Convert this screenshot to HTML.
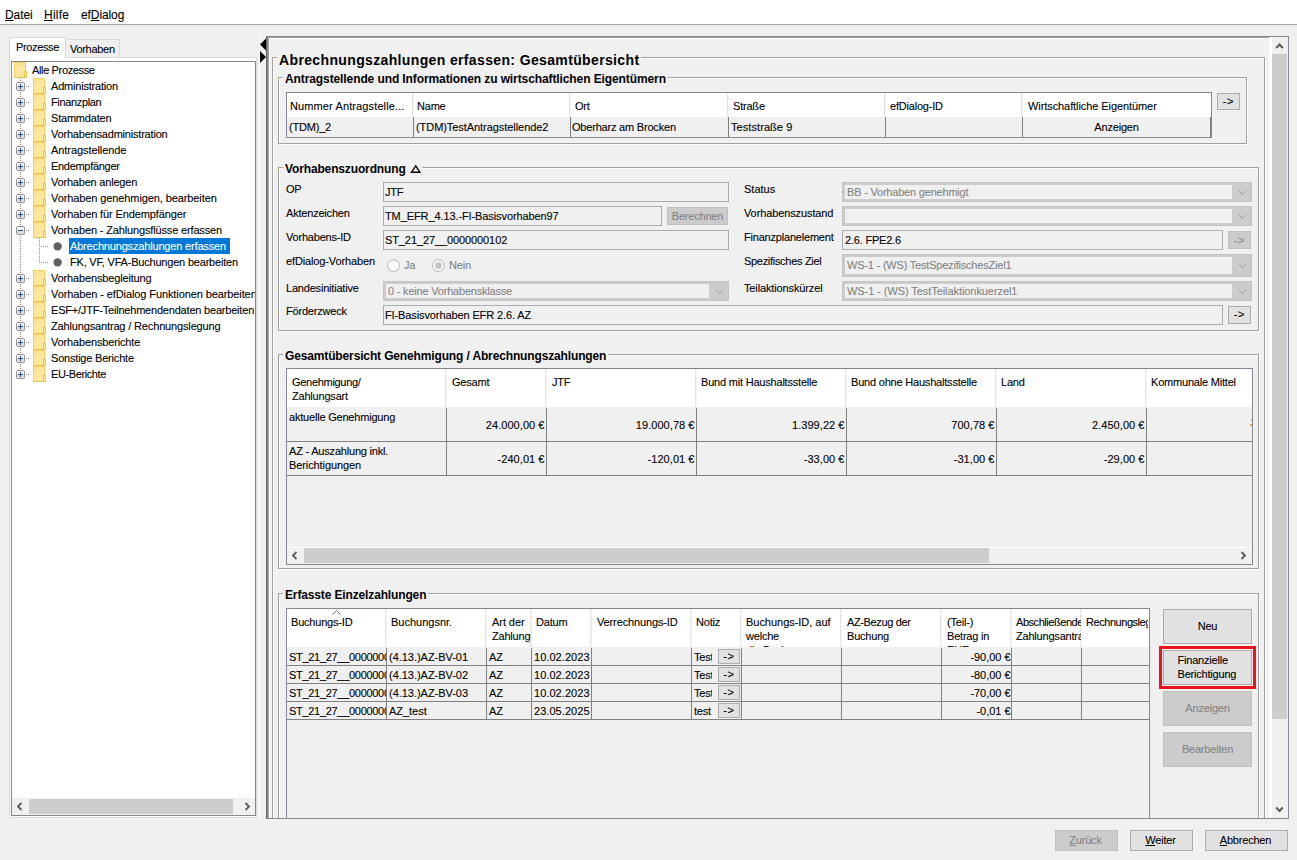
<!DOCTYPE html><html><head><meta charset="utf-8"><title>efREporter</title><style>
html,body{margin:0;padding:0}
body{width:1297px;height:860px;position:relative;overflow:hidden;background:#f0f0f0;
 font-family:"Liberation Sans",sans-serif;font-size:11px;line-height:13px;color:#000;letter-spacing:-0.2px}
div,span,svg{position:absolute;box-sizing:border-box;white-space:nowrap}
.t{font-size:11px;line-height:13px;-webkit-text-stroke:0.1px}
.g{color:#838383}
.b12{font-size:12px;line-height:14px;font-weight:bold;letter-spacing:-0.14px;background:#f0f0f0;padding:0 2px}
.b14{font-size:14px;line-height:16px;font-weight:bold;letter-spacing:0.36px;background:#f0f0f0;padding:0 2px}
.m{font-size:12px;line-height:14px;letter-spacing:-0.1px;-webkit-text-stroke:0.1px}
.eh{border:1px solid #fff}
.es{border:1px solid #a0a0a0}
.fld{border:1px solid #abadb3;background:#f0f0f0}
.btn{border:1px solid #adadad;background:#e1e1e1;text-align:center}
.btd{border:1px solid #bfbfbf;background:#ccc;color:#838383;text-align:center}
.cmb{border:1px solid #c3c3c3;background:#ccc}
.cmb i{position:absolute;left:2px;top:2px;bottom:2px;right:19px;background:#f0f0f0}
.sp{border:1px solid #828790}
.hd{background:#fff}
.vl{background:#808080;width:1px}
.hl{background:#808080;height:1px}
.vh{background:linear-gradient(to right,#e5e5e5 0,#e5e5e5 1px,#f4f4f4 1px,#f4f4f4 2px)}
.clip{overflow:hidden}
.u{text-decoration:underline}
.ar{letter-spacing:0.8px}
</style></head><body>
<div style="left:0px;top:0px;width:1297px;height:24px;background:#fff"></div>
<div style="left:0px;top:24px;width:1297px;height:1px;background:#a6a6a6"></div>
<span class="m" style="left:5px;top:8px"><span class="u" style="position:static">D</span>atei</span>
<span class="m" style="left:44px;top:8px"><span style="position:static;letter-spacing:0.25px"><span class="u" style="position:static">H</span>ilfe</span></span>
<span class="m" style="left:81px;top:8px">ef<span class="u" style="position:static">D</span>ialog</span>
<div style="left:9px;top:57px;width:248px;height:761px;background:#fff;border:1px solid #d9d9d9"></div>
<div style="left:65px;top:39px;width:55px;height:19px;background:#f0f0f0;border:1px solid #d9d9d9"></div>
<div style="left:9px;top:37px;width:57px;height:22px;background:#fff;border:1px solid #d9d9d9;border-bottom:none"></div>
<span class="t" style="left:16px;top:41px;letter-spacing:-0.36px">Prozesse</span>
<span class="t" style="left:70px;top:43px;letter-spacing:-0.3px">Vorhaben</span>
<div class="sp" style="left:11px;top:61px;width:245px;height:755px;background:#fff"></div>
<div class="clip" style="left:12px;top:62px;width:243px;height:736px">
<svg width="13" height="16" viewBox="0 0 13 16" style="left:2px;top:0px"><rect x="0.5" y="0.5" width="11" height="15" fill="#fde69e" stroke="#f3cf63"/><rect x="1" y="1" width="10" height="4" fill="#fce08c" opacity=".5"/><rect x="10.5" y="9.5" width="2" height="6" fill="#fde69e" stroke="#f0c850"/><rect x="0" y="15" width="13" height="1" fill="#edc552"/></svg>
<span class="t" style="left:20px;top:2px;letter-spacing:-0.36px">Alle Prozesse</span>
<div style="left:8px;top:16px;width:1px;height:297px;background:repeating-linear-gradient(to bottom,#8c8c8c 0,#8c8c8c 1px,transparent 1px,transparent 2px)"></div>
<div style="left:14px;top:24px;width:4px;height:1px;background:repeating-linear-gradient(to right,#8c8c8c 0,#8c8c8c 1px,transparent 1px,transparent 2px)"></div>
<svg width="9" height="9" viewBox="0 0 9 9" style="left:4px;top:20px"><rect x="0" y="0" width="9" height="9" fill="#fff"/><rect x="0.5" y="0.5" width="8" height="8" rx="1.2" fill="#f4f4f4" stroke="#919191"/><rect x="1" y="5" width="7" height="3" fill="#dcdcdc"/><rect x="2" y="4" width="5" height="1" fill="#2d4c9a"/><rect x="4" y="2" width="1" height="5" fill="#2d4c9a"/></svg>
<svg width="13" height="16" viewBox="0 0 13 16" style="left:21px;top:16px"><rect x="0.5" y="0.5" width="11" height="15" fill="#fde69e" stroke="#f3cf63"/><rect x="1" y="1" width="10" height="4" fill="#fce08c" opacity=".5"/><rect x="10.5" y="9.5" width="2" height="6" fill="#fde69e" stroke="#f0c850"/><rect x="0" y="15" width="13" height="1" fill="#edc552"/></svg>
<span class="t" style="left:39px;top:18px;">Administration</span>
<div style="left:14px;top:40px;width:4px;height:1px;background:repeating-linear-gradient(to right,#8c8c8c 0,#8c8c8c 1px,transparent 1px,transparent 2px)"></div>
<svg width="9" height="9" viewBox="0 0 9 9" style="left:4px;top:36px"><rect x="0" y="0" width="9" height="9" fill="#fff"/><rect x="0.5" y="0.5" width="8" height="8" rx="1.2" fill="#f4f4f4" stroke="#919191"/><rect x="1" y="5" width="7" height="3" fill="#dcdcdc"/><rect x="2" y="4" width="5" height="1" fill="#2d4c9a"/><rect x="4" y="2" width="1" height="5" fill="#2d4c9a"/></svg>
<svg width="13" height="16" viewBox="0 0 13 16" style="left:21px;top:32px"><rect x="0.5" y="0.5" width="11" height="15" fill="#fde69e" stroke="#f3cf63"/><rect x="1" y="1" width="10" height="4" fill="#fce08c" opacity=".5"/><rect x="10.5" y="9.5" width="2" height="6" fill="#fde69e" stroke="#f0c850"/><rect x="0" y="15" width="13" height="1" fill="#edc552"/></svg>
<span class="t" style="left:39px;top:34px;letter-spacing:-0.35px">Finanzplan</span>
<div style="left:14px;top:56px;width:4px;height:1px;background:repeating-linear-gradient(to right,#8c8c8c 0,#8c8c8c 1px,transparent 1px,transparent 2px)"></div>
<svg width="9" height="9" viewBox="0 0 9 9" style="left:4px;top:52px"><rect x="0" y="0" width="9" height="9" fill="#fff"/><rect x="0.5" y="0.5" width="8" height="8" rx="1.2" fill="#f4f4f4" stroke="#919191"/><rect x="1" y="5" width="7" height="3" fill="#dcdcdc"/><rect x="2" y="4" width="5" height="1" fill="#2d4c9a"/><rect x="4" y="2" width="1" height="5" fill="#2d4c9a"/></svg>
<svg width="13" height="16" viewBox="0 0 13 16" style="left:21px;top:48px"><rect x="0.5" y="0.5" width="11" height="15" fill="#fde69e" stroke="#f3cf63"/><rect x="1" y="1" width="10" height="4" fill="#fce08c" opacity=".5"/><rect x="10.5" y="9.5" width="2" height="6" fill="#fde69e" stroke="#f0c850"/><rect x="0" y="15" width="13" height="1" fill="#edc552"/></svg>
<span class="t" style="left:39px;top:50px;">Stammdaten</span>
<div style="left:14px;top:72px;width:4px;height:1px;background:repeating-linear-gradient(to right,#8c8c8c 0,#8c8c8c 1px,transparent 1px,transparent 2px)"></div>
<svg width="9" height="9" viewBox="0 0 9 9" style="left:4px;top:68px"><rect x="0" y="0" width="9" height="9" fill="#fff"/><rect x="0.5" y="0.5" width="8" height="8" rx="1.2" fill="#f4f4f4" stroke="#919191"/><rect x="1" y="5" width="7" height="3" fill="#dcdcdc"/><rect x="2" y="4" width="5" height="1" fill="#2d4c9a"/><rect x="4" y="2" width="1" height="5" fill="#2d4c9a"/></svg>
<svg width="13" height="16" viewBox="0 0 13 16" style="left:21px;top:64px"><rect x="0.5" y="0.5" width="11" height="15" fill="#fde69e" stroke="#f3cf63"/><rect x="1" y="1" width="10" height="4" fill="#fce08c" opacity=".5"/><rect x="10.5" y="9.5" width="2" height="6" fill="#fde69e" stroke="#f0c850"/><rect x="0" y="15" width="13" height="1" fill="#edc552"/></svg>
<span class="t" style="left:39px;top:66px;">Vorhabensadministration</span>
<div style="left:14px;top:88px;width:4px;height:1px;background:repeating-linear-gradient(to right,#8c8c8c 0,#8c8c8c 1px,transparent 1px,transparent 2px)"></div>
<svg width="9" height="9" viewBox="0 0 9 9" style="left:4px;top:84px"><rect x="0" y="0" width="9" height="9" fill="#fff"/><rect x="0.5" y="0.5" width="8" height="8" rx="1.2" fill="#f4f4f4" stroke="#919191"/><rect x="1" y="5" width="7" height="3" fill="#dcdcdc"/><rect x="2" y="4" width="5" height="1" fill="#2d4c9a"/><rect x="4" y="2" width="1" height="5" fill="#2d4c9a"/></svg>
<svg width="13" height="16" viewBox="0 0 13 16" style="left:21px;top:80px"><rect x="0.5" y="0.5" width="11" height="15" fill="#fde69e" stroke="#f3cf63"/><rect x="1" y="1" width="10" height="4" fill="#fce08c" opacity=".5"/><rect x="10.5" y="9.5" width="2" height="6" fill="#fde69e" stroke="#f0c850"/><rect x="0" y="15" width="13" height="1" fill="#edc552"/></svg>
<span class="t" style="left:39px;top:82px;letter-spacing:-0.07px">Antragstellende</span>
<div style="left:14px;top:104px;width:4px;height:1px;background:repeating-linear-gradient(to right,#8c8c8c 0,#8c8c8c 1px,transparent 1px,transparent 2px)"></div>
<svg width="9" height="9" viewBox="0 0 9 9" style="left:4px;top:100px"><rect x="0" y="0" width="9" height="9" fill="#fff"/><rect x="0.5" y="0.5" width="8" height="8" rx="1.2" fill="#f4f4f4" stroke="#919191"/><rect x="1" y="5" width="7" height="3" fill="#dcdcdc"/><rect x="2" y="4" width="5" height="1" fill="#2d4c9a"/><rect x="4" y="2" width="1" height="5" fill="#2d4c9a"/></svg>
<svg width="13" height="16" viewBox="0 0 13 16" style="left:21px;top:96px"><rect x="0.5" y="0.5" width="11" height="15" fill="#fde69e" stroke="#f3cf63"/><rect x="1" y="1" width="10" height="4" fill="#fce08c" opacity=".5"/><rect x="10.5" y="9.5" width="2" height="6" fill="#fde69e" stroke="#f0c850"/><rect x="0" y="15" width="13" height="1" fill="#edc552"/></svg>
<span class="t" style="left:39px;top:98px;letter-spacing:-0.3px">Endempfänger</span>
<div style="left:14px;top:120px;width:4px;height:1px;background:repeating-linear-gradient(to right,#8c8c8c 0,#8c8c8c 1px,transparent 1px,transparent 2px)"></div>
<svg width="9" height="9" viewBox="0 0 9 9" style="left:4px;top:116px"><rect x="0" y="0" width="9" height="9" fill="#fff"/><rect x="0.5" y="0.5" width="8" height="8" rx="1.2" fill="#f4f4f4" stroke="#919191"/><rect x="1" y="5" width="7" height="3" fill="#dcdcdc"/><rect x="2" y="4" width="5" height="1" fill="#2d4c9a"/><rect x="4" y="2" width="1" height="5" fill="#2d4c9a"/></svg>
<svg width="13" height="16" viewBox="0 0 13 16" style="left:21px;top:112px"><rect x="0.5" y="0.5" width="11" height="15" fill="#fde69e" stroke="#f3cf63"/><rect x="1" y="1" width="10" height="4" fill="#fce08c" opacity=".5"/><rect x="10.5" y="9.5" width="2" height="6" fill="#fde69e" stroke="#f0c850"/><rect x="0" y="15" width="13" height="1" fill="#edc552"/></svg>
<span class="t" style="left:39px;top:114px;">Vorhaben anlegen</span>
<div style="left:14px;top:136px;width:4px;height:1px;background:repeating-linear-gradient(to right,#8c8c8c 0,#8c8c8c 1px,transparent 1px,transparent 2px)"></div>
<svg width="9" height="9" viewBox="0 0 9 9" style="left:4px;top:132px"><rect x="0" y="0" width="9" height="9" fill="#fff"/><rect x="0.5" y="0.5" width="8" height="8" rx="1.2" fill="#f4f4f4" stroke="#919191"/><rect x="1" y="5" width="7" height="3" fill="#dcdcdc"/><rect x="2" y="4" width="5" height="1" fill="#2d4c9a"/><rect x="4" y="2" width="1" height="5" fill="#2d4c9a"/></svg>
<svg width="13" height="16" viewBox="0 0 13 16" style="left:21px;top:128px"><rect x="0.5" y="0.5" width="11" height="15" fill="#fde69e" stroke="#f3cf63"/><rect x="1" y="1" width="10" height="4" fill="#fce08c" opacity=".5"/><rect x="10.5" y="9.5" width="2" height="6" fill="#fde69e" stroke="#f0c850"/><rect x="0" y="15" width="13" height="1" fill="#edc552"/></svg>
<span class="t" style="left:39px;top:130px;letter-spacing:-0.1px">Vorhaben genehmigen, bearbeiten</span>
<div style="left:14px;top:152px;width:4px;height:1px;background:repeating-linear-gradient(to right,#8c8c8c 0,#8c8c8c 1px,transparent 1px,transparent 2px)"></div>
<svg width="9" height="9" viewBox="0 0 9 9" style="left:4px;top:148px"><rect x="0" y="0" width="9" height="9" fill="#fff"/><rect x="0.5" y="0.5" width="8" height="8" rx="1.2" fill="#f4f4f4" stroke="#919191"/><rect x="1" y="5" width="7" height="3" fill="#dcdcdc"/><rect x="2" y="4" width="5" height="1" fill="#2d4c9a"/><rect x="4" y="2" width="1" height="5" fill="#2d4c9a"/></svg>
<svg width="13" height="16" viewBox="0 0 13 16" style="left:21px;top:144px"><rect x="0.5" y="0.5" width="11" height="15" fill="#fde69e" stroke="#f3cf63"/><rect x="1" y="1" width="10" height="4" fill="#fce08c" opacity=".5"/><rect x="10.5" y="9.5" width="2" height="6" fill="#fde69e" stroke="#f0c850"/><rect x="0" y="15" width="13" height="1" fill="#edc552"/></svg>
<span class="t" style="left:39px;top:146px;letter-spacing:-0.12px">Vorhaben für Endempfänger</span>
<div style="left:14px;top:168px;width:4px;height:1px;background:repeating-linear-gradient(to right,#8c8c8c 0,#8c8c8c 1px,transparent 1px,transparent 2px)"></div>
<svg width="9" height="9" viewBox="0 0 9 9" style="left:4px;top:164px"><rect x="0" y="0" width="9" height="9" fill="#fff"/><rect x="0.5" y="0.5" width="8" height="8" rx="1.2" fill="#f4f4f4" stroke="#919191"/><rect x="1" y="5" width="7" height="3" fill="#dcdcdc"/><rect x="2" y="4" width="5" height="1" fill="#2d4c9a"/></svg>
<svg width="13" height="16" viewBox="0 0 13 16" style="left:21px;top:160px"><rect x="0.5" y="0.5" width="11" height="15" fill="#fde69e" stroke="#f3cf63"/><rect x="1" y="1" width="10" height="4" fill="#fce08c" opacity=".5"/><rect x="10.5" y="9.5" width="2" height="6" fill="#fde69e" stroke="#f0c850"/><rect x="0" y="15" width="13" height="1" fill="#edc552"/></svg>
<span class="t" style="left:39px;top:162px;letter-spacing:-0.15px">Vorhaben - Zahlungsflüsse erfassen</span>
<div style="left:14px;top:216px;width:4px;height:1px;background:repeating-linear-gradient(to right,#8c8c8c 0,#8c8c8c 1px,transparent 1px,transparent 2px)"></div>
<svg width="9" height="9" viewBox="0 0 9 9" style="left:4px;top:212px"><rect x="0" y="0" width="9" height="9" fill="#fff"/><rect x="0.5" y="0.5" width="8" height="8" rx="1.2" fill="#f4f4f4" stroke="#919191"/><rect x="1" y="5" width="7" height="3" fill="#dcdcdc"/><rect x="2" y="4" width="5" height="1" fill="#2d4c9a"/><rect x="4" y="2" width="1" height="5" fill="#2d4c9a"/></svg>
<svg width="13" height="16" viewBox="0 0 13 16" style="left:21px;top:208px"><rect x="0.5" y="0.5" width="11" height="15" fill="#fde69e" stroke="#f3cf63"/><rect x="1" y="1" width="10" height="4" fill="#fce08c" opacity=".5"/><rect x="10.5" y="9.5" width="2" height="6" fill="#fde69e" stroke="#f0c850"/><rect x="0" y="15" width="13" height="1" fill="#edc552"/></svg>
<span class="t" style="left:39px;top:210px;letter-spacing:-0.15px">Vorhabensbegleitung</span>
<div style="left:14px;top:232px;width:4px;height:1px;background:repeating-linear-gradient(to right,#8c8c8c 0,#8c8c8c 1px,transparent 1px,transparent 2px)"></div>
<svg width="9" height="9" viewBox="0 0 9 9" style="left:4px;top:228px"><rect x="0" y="0" width="9" height="9" fill="#fff"/><rect x="0.5" y="0.5" width="8" height="8" rx="1.2" fill="#f4f4f4" stroke="#919191"/><rect x="1" y="5" width="7" height="3" fill="#dcdcdc"/><rect x="2" y="4" width="5" height="1" fill="#2d4c9a"/><rect x="4" y="2" width="1" height="5" fill="#2d4c9a"/></svg>
<svg width="13" height="16" viewBox="0 0 13 16" style="left:21px;top:224px"><rect x="0.5" y="0.5" width="11" height="15" fill="#fde69e" stroke="#f3cf63"/><rect x="1" y="1" width="10" height="4" fill="#fce08c" opacity=".5"/><rect x="10.5" y="9.5" width="2" height="6" fill="#fde69e" stroke="#f0c850"/><rect x="0" y="15" width="13" height="1" fill="#edc552"/></svg>
<span class="t" style="left:39px;top:226px;letter-spacing:-0.1px">Vorhaben - efDialog Funktionen bearbeiten</span>
<div style="left:14px;top:248px;width:4px;height:1px;background:repeating-linear-gradient(to right,#8c8c8c 0,#8c8c8c 1px,transparent 1px,transparent 2px)"></div>
<svg width="9" height="9" viewBox="0 0 9 9" style="left:4px;top:244px"><rect x="0" y="0" width="9" height="9" fill="#fff"/><rect x="0.5" y="0.5" width="8" height="8" rx="1.2" fill="#f4f4f4" stroke="#919191"/><rect x="1" y="5" width="7" height="3" fill="#dcdcdc"/><rect x="2" y="4" width="5" height="1" fill="#2d4c9a"/><rect x="4" y="2" width="1" height="5" fill="#2d4c9a"/></svg>
<svg width="13" height="16" viewBox="0 0 13 16" style="left:21px;top:240px"><rect x="0.5" y="0.5" width="11" height="15" fill="#fde69e" stroke="#f3cf63"/><rect x="1" y="1" width="10" height="4" fill="#fce08c" opacity=".5"/><rect x="10.5" y="9.5" width="2" height="6" fill="#fde69e" stroke="#f0c850"/><rect x="0" y="15" width="13" height="1" fill="#edc552"/></svg>
<span class="t" style="left:39px;top:242px;">ESF+/JTF-Teilnehmendendaten bearbeiten</span>
<div style="left:14px;top:264px;width:4px;height:1px;background:repeating-linear-gradient(to right,#8c8c8c 0,#8c8c8c 1px,transparent 1px,transparent 2px)"></div>
<svg width="9" height="9" viewBox="0 0 9 9" style="left:4px;top:260px"><rect x="0" y="0" width="9" height="9" fill="#fff"/><rect x="0.5" y="0.5" width="8" height="8" rx="1.2" fill="#f4f4f4" stroke="#919191"/><rect x="1" y="5" width="7" height="3" fill="#dcdcdc"/><rect x="2" y="4" width="5" height="1" fill="#2d4c9a"/><rect x="4" y="2" width="1" height="5" fill="#2d4c9a"/></svg>
<svg width="13" height="16" viewBox="0 0 13 16" style="left:21px;top:256px"><rect x="0.5" y="0.5" width="11" height="15" fill="#fde69e" stroke="#f3cf63"/><rect x="1" y="1" width="10" height="4" fill="#fce08c" opacity=".5"/><rect x="10.5" y="9.5" width="2" height="6" fill="#fde69e" stroke="#f0c850"/><rect x="0" y="15" width="13" height="1" fill="#edc552"/></svg>
<span class="t" style="left:39px;top:258px;letter-spacing:-0.15px">Zahlungsantrag / Rechnungslegung</span>
<div style="left:14px;top:280px;width:4px;height:1px;background:repeating-linear-gradient(to right,#8c8c8c 0,#8c8c8c 1px,transparent 1px,transparent 2px)"></div>
<svg width="9" height="9" viewBox="0 0 9 9" style="left:4px;top:276px"><rect x="0" y="0" width="9" height="9" fill="#fff"/><rect x="0.5" y="0.5" width="8" height="8" rx="1.2" fill="#f4f4f4" stroke="#919191"/><rect x="1" y="5" width="7" height="3" fill="#dcdcdc"/><rect x="2" y="4" width="5" height="1" fill="#2d4c9a"/><rect x="4" y="2" width="1" height="5" fill="#2d4c9a"/></svg>
<svg width="13" height="16" viewBox="0 0 13 16" style="left:21px;top:272px"><rect x="0.5" y="0.5" width="11" height="15" fill="#fde69e" stroke="#f3cf63"/><rect x="1" y="1" width="10" height="4" fill="#fce08c" opacity=".5"/><rect x="10.5" y="9.5" width="2" height="6" fill="#fde69e" stroke="#f0c850"/><rect x="0" y="15" width="13" height="1" fill="#edc552"/></svg>
<span class="t" style="left:39px;top:274px;letter-spacing:-0.15px">Vorhabensberichte</span>
<div style="left:14px;top:296px;width:4px;height:1px;background:repeating-linear-gradient(to right,#8c8c8c 0,#8c8c8c 1px,transparent 1px,transparent 2px)"></div>
<svg width="9" height="9" viewBox="0 0 9 9" style="left:4px;top:292px"><rect x="0" y="0" width="9" height="9" fill="#fff"/><rect x="0.5" y="0.5" width="8" height="8" rx="1.2" fill="#f4f4f4" stroke="#919191"/><rect x="1" y="5" width="7" height="3" fill="#dcdcdc"/><rect x="2" y="4" width="5" height="1" fill="#2d4c9a"/><rect x="4" y="2" width="1" height="5" fill="#2d4c9a"/></svg>
<svg width="13" height="16" viewBox="0 0 13 16" style="left:21px;top:288px"><rect x="0.5" y="0.5" width="11" height="15" fill="#fde69e" stroke="#f3cf63"/><rect x="1" y="1" width="10" height="4" fill="#fce08c" opacity=".5"/><rect x="10.5" y="9.5" width="2" height="6" fill="#fde69e" stroke="#f0c850"/><rect x="0" y="15" width="13" height="1" fill="#edc552"/></svg>
<span class="t" style="left:39px;top:290px;">Sonstige Berichte</span>
<div style="left:14px;top:312px;width:4px;height:1px;background:repeating-linear-gradient(to right,#8c8c8c 0,#8c8c8c 1px,transparent 1px,transparent 2px)"></div>
<svg width="9" height="9" viewBox="0 0 9 9" style="left:4px;top:308px"><rect x="0" y="0" width="9" height="9" fill="#fff"/><rect x="0.5" y="0.5" width="8" height="8" rx="1.2" fill="#f4f4f4" stroke="#919191"/><rect x="1" y="5" width="7" height="3" fill="#dcdcdc"/><rect x="2" y="4" width="5" height="1" fill="#2d4c9a"/><rect x="4" y="2" width="1" height="5" fill="#2d4c9a"/></svg>
<svg width="13" height="16" viewBox="0 0 13 16" style="left:21px;top:304px"><rect x="0.5" y="0.5" width="11" height="15" fill="#fde69e" stroke="#f3cf63"/><rect x="1" y="1" width="10" height="4" fill="#fce08c" opacity=".5"/><rect x="10.5" y="9.5" width="2" height="6" fill="#fde69e" stroke="#f0c850"/><rect x="0" y="15" width="13" height="1" fill="#edc552"/></svg>
<span class="t" style="left:39px;top:306px;letter-spacing:-0.4px">EU-Berichte</span>
<div style="left:27px;top:176px;width:1px;height:25px;background:repeating-linear-gradient(to bottom,#8c8c8c 0,#8c8c8c 1px,transparent 1px,transparent 2px)"></div>
<div style="left:29px;top:184px;width:8px;height:1px;background:repeating-linear-gradient(to right,#8c8c8c 0,#8c8c8c 1px,transparent 1px,transparent 2px)"></div>
<svg width="10" height="10" viewBox="0 0 10 10" style="left:41px;top:180px"><circle cx="4.6" cy="4.4" r="4.2" fill="#606060"/></svg>
<div style="left:29px;top:200px;width:8px;height:1px;background:repeating-linear-gradient(to right,#8c8c8c 0,#8c8c8c 1px,transparent 1px,transparent 2px)"></div>
<svg width="10" height="10" viewBox="0 0 10 10" style="left:41px;top:196px"><circle cx="4.6" cy="4.4" r="4.2" fill="#606060"/></svg>
<div style="left:57px;top:176px;width:161px;height:16px;background:#0078d7"></div>
<span class="t" style="left:58px;top:178px;color:#fff;letter-spacing:-0.17px">Abrechnungszahlungen erfassen</span>
<span class="t" style="left:58px;top:194px;">FK, VF, VFA-Buchungen bearbeiten</span>
</div>
<div style="left:12px;top:798px;width:243px;height:17px;background:#f0f0f0"></div>
<div style="left:29px;top:799px;width:204px;height:15px;background:#cdcdcd"></div>
<svg width="7" height="9" viewBox="0 0 7 9" style="left:16px;top:802px"><path d="M5.5 1 L2 4.5 L5.5 8" fill="none" stroke="#5a5a5a" stroke-width="1.8"/></svg>
<svg width="7" height="9" viewBox="0 0 7 9" style="left:244px;top:802px"><path d="M1.5 1 L5 4.5 L1.5 8" fill="none" stroke="#5a5a5a" stroke-width="1.8"/></svg>
<div style="left:259px;top:36px;width:1px;height:783px;background:#fff"></div>
<svg width="7" height="26" viewBox="0 0 7 26" style="left:260px;top:38px"><path d="M6 0.5 L0 6.5 L6 12.5 Z" fill="#000"/><path d="M0 13 L6 19 L0 25 Z" fill="#000"/></svg>
<div style="left:266px;top:36px;width:1px;height:783px;background:#6a6a6a"></div>
<div class="sp" style="left:267px;top:36px;width:1022px;height:783px;"></div>
<div style="left:268px;top:37px;width:1001px;height:1px;background:#a0a0a0"></div>
<div style="left:268px;top:37px;width:1px;height:781px;background:#a0a0a0"></div>
<div style="left:269px;top:38px;width:1000px;height:1px;background:#fff"></div>
<div style="left:269px;top:38px;width:1px;height:780px;background:#fff"></div>
<div style="left:1269px;top:37px;width:3px;height:781px;background:#fff"></div>
<div style="left:1272px;top:37px;width:16px;height:781px;background:#f0f0f0"></div>
<div style="left:1272px;top:54px;width:15px;height:665px;background:#cdcdcd"></div>
<svg width="9" height="8" viewBox="0 0 9 8" style="left:1275px;top:42px"><path d="M1.2 6 L4.5 2.5 L7.8 6" fill="none" stroke="#5a5a5a" stroke-width="2"/></svg>
<svg width="9" height="8" viewBox="0 0 9 8" style="left:1275px;top:806px"><path d="M1.2 1.5 L4.5 5 L7.8 1.5" fill="none" stroke="#5a5a5a" stroke-width="2"/></svg>
<div class="clip" style="left:270px;top:39px;width:999px;height:779px">
<div class="eh" style="left:3px;top:19px;width:993px;height:784px;"></div>
<div class="es" style="left:2px;top:18px;width:993px;height:784px;"></div>
<span class="b14" style="left:7px;top:13px;">Abrechnungszahlungen erfassen: Gesamtübersicht</span>
<div class="eh" style="left:9px;top:39px;width:969px;height:67px;"></div>
<div class="es" style="left:8px;top:38px;width:969px;height:67px;"></div>
<span class="b12" style="left:13px;top:33px;letter-spacing:-0.1px">Antragstellende und Informationen zu wirtschaftlichen Eigentümern</span>
<div class="sp" style="left:16px;top:53px;width:926px;height:46px;"></div>
<div class="hd" style="left:17px;top:54px;width:924px;height:24px;"></div>
<div class="vh" style="left:142px;top:54px;width:2px;height:24px;"></div>
<div class="vl" style="left:143px;top:78px;width:1px;height:20px;"></div>
<div class="vh" style="left:299px;top:54px;width:2px;height:24px;"></div>
<div class="vl" style="left:300px;top:78px;width:1px;height:20px;"></div>
<div class="vh" style="left:457px;top:54px;width:2px;height:24px;"></div>
<div class="vl" style="left:458px;top:78px;width:1px;height:20px;"></div>
<div class="vh" style="left:614px;top:54px;width:2px;height:24px;"></div>
<div class="vl" style="left:615px;top:78px;width:1px;height:20px;"></div>
<div class="vh" style="left:751px;top:54px;width:2px;height:24px;"></div>
<div class="vl" style="left:752px;top:78px;width:1px;height:20px;"></div>
<div class="vl" style="left:940px;top:78px;width:1px;height:20px;"></div>
<span class="t" style="left:20px;top:61px;letter-spacing:0.12px;">Nummer Antragstelle...</span>
<span class="t" style="left:147px;top:61px;">Name</span>
<span class="t" style="left:305px;top:61px;">Ort</span>
<span class="t" style="left:463px;top:61px;">Straße</span>
<span class="t" style="left:620px;top:61px;">efDialog-ID</span>
<span class="t" style="left:758px;top:61px;letter-spacing:-0.08px;">Wirtschaftliche Eigentümer</span>
<span class="t" style="left:19px;top:82px;">(TDM)_2</span>
<span class="t" style="left:146px;top:82px;letter-spacing:-0.06px;">(TDM)TestAntragstellende2</span>
<span class="t" style="left:302px;top:82px;">Oberharz am Brocken</span>
<span class="t" style="left:461px;top:82px;letter-spacing:0.07px;">Teststraße 9</span>
<div class="t" style="left:753px;top:82px;width:187px;height:13px;text-align:center">Anzeigen</div>
<div class="btn" style="left:947px;top:54px;width:23px;height:17px;"><span class="t ar" style="left:0;right:0;top:1px;text-align:center">-&gt;</span></div>
<div class="eh" style="left:9px;top:129px;width:981px;height:164px;"></div>
<div class="es" style="left:8px;top:128px;width:981px;height:164px;"></div>
<span class="b12" style="left:13px;top:123px;padding-right:16px">Vorhabenszuordnung</span>
<svg width="12" height="10" viewBox="0 0 12 10" style="left:140px;top:125px"><path d="M5.7 1.9 L9.9 8.2 L1.5 8.2 Z" fill="none" stroke="#000" stroke-width="1.4" stroke-linejoin="miter"/></svg>
<span class="t" style="left:16px;top:144px;">OP</span>
<span class="t" style="left:16px;top:168px;">Aktenzeichen</span>
<span class="t" style="left:16px;top:192px;">Vorhabens-ID</span>
<span class="t" style="left:16px;top:216px;letter-spacing:-0.13px;">efDialog-Vorhaben</span>
<span class="t" style="left:16px;top:243px;">Landesinitiative</span>
<span class="t" style="left:16px;top:266px;">Förderzweck</span>
<span class="t" style="left:474px;top:144px;letter-spacing:0.0px;">Status</span>
<span class="t" style="left:474px;top:168px;letter-spacing:-0.11px;">Vorhabenszustand</span>
<span class="t" style="left:474px;top:192px;">Finanzplanelement</span>
<span class="t" style="left:474px;top:216px;letter-spacing:-0.3px;">Spezifisches Ziel</span>
<span class="t" style="left:474px;top:243px;letter-spacing:-0.13px;">Teilaktionskürzel</span>
<div class="fld" style="left:113px;top:143px;width:346px;height:20px;"></div>
<span class="t" style="left:115px;top:147px;">JTF</span>
<div class="fld" style="left:113px;top:167px;width:279px;height:20px;"></div>
<span class="t" style="left:115px;top:171px;letter-spacing:-0.1px;">TM_EFR_4.13.-FI-Basisvorhaben97</span>
<div class="btd" style="left:397px;top:168px;width:61px;height:18px;"><span class="t" style="left:0;right:0;top:2px;text-align:center">Berechnen</span></div>
<div class="fld" style="left:113px;top:191px;width:346px;height:20px;"></div>
<span class="t" style="left:115px;top:195px;letter-spacing:-0.1px;">ST_21_27__0000000102</span>
<svg width="13" height="13" viewBox="0 0 13 13" style="left:117px;top:220px"><circle cx="6.5" cy="6.5" r="5.9" fill="#fff" stroke="#c2c2c2" stroke-width="1.2"/></svg>
<span class="t g" style="left:134px;top:220px;">Ja</span>
<svg width="13" height="13" viewBox="0 0 13 13" style="left:162px;top:220px"><circle cx="6.5" cy="6.5" r="5.9" fill="#fff" stroke="#c2c2c2" stroke-width="1.2"/><circle cx="6.5" cy="6.5" r="3.4" fill="#c4c4c4"/></svg>
<span class="t g" style="left:179px;top:220px;">Nein</span>
<div class="cmb" style="left:113px;top:242px;width:346px;height:20px;"><i></i></div>
<svg width="9" height="6" viewBox="0 0 9 6" style="left:445px;top:250px"><path d="M0.5 0.5 L4.5 4.5 L8.5 0.5" fill="none" stroke="#9d9d9d" stroke-width="1"/></svg>
<span class="t g" style="left:118px;top:246px;">0 - keine Vorhabensklasse</span>
<div class="fld" style="left:113px;top:266px;width:840px;height:20px;"></div>
<span class="t" style="left:115px;top:270px;letter-spacing:-0.11px;">FI-Basisvorhaben EFR 2.6. AZ</span>
<div class="btn" style="left:958px;top:267px;width:23px;height:18px;"><span class="t ar" style="left:0;right:0;top:1px;text-align:center">-&gt;</span></div>
<div class="cmb" style="left:572px;top:143px;width:410px;height:20px;"><i></i></div>
<svg width="9" height="6" viewBox="0 0 9 6" style="left:968px;top:151px"><path d="M0.5 0.5 L4.5 4.5 L8.5 0.5" fill="none" stroke="#9d9d9d" stroke-width="1"/></svg>
<span class="t g" style="left:577px;top:147px;">BB - Vorhaben genehmigt</span>
<div class="cmb" style="left:572px;top:167px;width:410px;height:20px;"><i></i></div>
<svg width="9" height="6" viewBox="0 0 9 6" style="left:968px;top:175px"><path d="M0.5 0.5 L4.5 4.5 L8.5 0.5" fill="none" stroke="#9d9d9d" stroke-width="1"/></svg>
<div class="fld" style="left:572px;top:191px;width:381px;height:20px;"></div>
<span class="t" style="left:575px;top:195px;">2.6. FPE2.6</span>
<div class="btd" style="left:958px;top:192px;width:23px;height:18px;"><span class="t ar" style="left:0;right:0;top:2px;text-align:center">-&gt;</span></div>
<div class="cmb" style="left:572px;top:215px;width:410px;height:23px;"><i></i></div>
<svg width="9" height="6" viewBox="0 0 9 6" style="left:968px;top:224px"><path d="M0.5 0.5 L4.5 4.5 L8.5 0.5" fill="none" stroke="#9d9d9d" stroke-width="1"/></svg>
<span class="t g" style="left:577px;top:220px;">WS-1 - (WS) TestSpezifischesZiel1</span>
<div class="cmb" style="left:572px;top:242px;width:410px;height:20px;"><i></i></div>
<svg width="9" height="6" viewBox="0 0 9 6" style="left:968px;top:250px"><path d="M0.5 0.5 L4.5 4.5 L8.5 0.5" fill="none" stroke="#9d9d9d" stroke-width="1"/></svg>
<span class="t g" style="left:577px;top:246px;letter-spacing:-0.07px;">WS-1 - (WS) TestTeilaktionkuerzel1</span>
<div class="eh" style="left:9px;top:316px;width:981px;height:215px;"></div>
<div class="es" style="left:8px;top:315px;width:981px;height:215px;"></div>
<span class="b12" style="left:13px;top:310px;">Gesamtübersicht Genehmigung / Abrechnungszahlungen</span>
<div class="sp" style="left:16px;top:329px;width:967px;height:197px;"></div>
<div class="hd" style="left:17px;top:330px;width:965px;height:38px;"></div>
<div class="vh" style="left:175px;top:330px;width:2px;height:38px;"></div>
<div class="vl" style="left:176px;top:369px;width:1px;height:68px;"></div>
<div class="vh" style="left:275px;top:330px;width:2px;height:38px;"></div>
<div class="vl" style="left:276px;top:369px;width:1px;height:68px;"></div>
<div class="vh" style="left:425px;top:330px;width:2px;height:38px;"></div>
<div class="vl" style="left:426px;top:369px;width:1px;height:68px;"></div>
<div class="vh" style="left:575px;top:330px;width:2px;height:38px;"></div>
<div class="vl" style="left:576px;top:369px;width:1px;height:68px;"></div>
<div class="vh" style="left:725px;top:330px;width:2px;height:38px;"></div>
<div class="vl" style="left:726px;top:369px;width:1px;height:68px;"></div>
<div class="vh" style="left:875px;top:330px;width:2px;height:38px;"></div>
<div class="vl" style="left:876px;top:369px;width:1px;height:68px;"></div>
<div class="hl" style="left:17px;top:402px;width:965px;height:1px;"></div>
<div class="hl" style="left:17px;top:436px;width:965px;height:1px;"></div>
<span class="t" style="left:22px;top:337px;letter-spacing:-0.3px;">Genehmigung/</span>
<span class="t" style="left:22px;top:351px;">Zahlungsart</span>
<span class="t" style="left:182px;top:337px;">Gesamt</span>
<span class="t" style="left:282px;top:337px;">JTF</span>
<span class="t" style="left:431px;top:337px;">Bund mit Haushaltsstelle</span>
<span class="t" style="left:581px;top:337px;">Bund ohne Haushaltsstelle</span>
<span class="t" style="left:731px;top:337px;">Land</span>
<span class="t" style="left:881px;top:337px;">Kommunale Mittel</span>
<span class="t" style="left:19px;top:372px;">aktuelle Genehmigung</span>
<span class="t" style="left:19px;top:406px;">AZ - Auszahlung inkl.</span>
<span class="t" style="left:19px;top:420px;letter-spacing:-0.1px;">Berichtigungen</span>
<span class="t" style="right:724.5px;top:380px;letter-spacing:0.05px">24.000,00 €</span>
<span class="t" style="right:724.5px;top:414px;letter-spacing:0.05px">-240,01 €</span>
<span class="t" style="right:574.5px;top:380px;letter-spacing:0.05px">19.000,78 €</span>
<span class="t" style="right:574.5px;top:414px;letter-spacing:0.05px">-120,01 €</span>
<span class="t" style="right:424.5px;top:380px;letter-spacing:0.05px">1.399,22 €</span>
<span class="t" style="right:424.5px;top:414px;letter-spacing:0.05px">-33,00 €</span>
<span class="t" style="right:274.5px;top:380px;letter-spacing:0.05px">700,78 €</span>
<span class="t" style="right:274.5px;top:414px;letter-spacing:0.05px">-31,00 €</span>
<span class="t" style="right:124.5px;top:380px;letter-spacing:0.05px">2.450,00 €</span>
<span class="t" style="right:124.5px;top:414px;letter-spacing:0.05px">-29,00 €</span>
<div style="left:981px;top:380px;width:1px;height:2px;background:#d9a441"></div>
<div style="left:980px;top:385px;width:2px;height:2px;background:#d9a441"></div>
<div style="left:17px;top:508px;width:965px;height:1px;background:#fff"></div>
<div style="left:17px;top:509px;width:965px;height:16px;background:#f0f0f0"></div>
<div style="left:34px;top:509px;width:685px;height:15px;background:#cdcdcd"></div>
<svg width="7" height="9" viewBox="0 0 7 9" style="left:21px;top:512px"><path d="M5.5 1 L2 4.5 L5.5 8" fill="none" stroke="#5a5a5a" stroke-width="1.8"/></svg>
<svg width="7" height="9" viewBox="0 0 7 9" style="left:970px;top:512px"><path d="M1.5 1 L5 4.5 L1.5 8" fill="none" stroke="#5a5a5a" stroke-width="1.8"/></svg>
<div class="eh" style="left:9px;top:555px;width:981px;height:238px;"></div>
<div class="es" style="left:8px;top:554px;width:981px;height:238px;"></div>
<span class="b12" style="left:13px;top:549px;">Erfasste Einzelzahlungen</span>
<div class="sp" style="left:16px;top:569px;width:864px;height:215px;"></div>
<div class="hd" style="left:17px;top:570px;width:862px;height:38px;"></div>
<div class="vh" style="left:115px;top:570px;width:2px;height:38px;"></div>
<div class="vl" style="left:116px;top:609px;width:1px;height:72px;"></div>
<div class="vh" style="left:215px;top:570px;width:2px;height:38px;"></div>
<div class="vl" style="left:216px;top:609px;width:1px;height:72px;"></div>
<div class="vh" style="left:260px;top:570px;width:2px;height:38px;"></div>
<div class="vl" style="left:261px;top:609px;width:1px;height:72px;"></div>
<div class="vh" style="left:320px;top:570px;width:2px;height:38px;"></div>
<div class="vl" style="left:321px;top:609px;width:1px;height:72px;"></div>
<div class="vh" style="left:420px;top:570px;width:2px;height:38px;"></div>
<div class="vl" style="left:421px;top:609px;width:1px;height:72px;"></div>
<div class="vh" style="left:470px;top:570px;width:2px;height:38px;"></div>
<div class="vl" style="left:471px;top:609px;width:1px;height:72px;"></div>
<div class="vh" style="left:570px;top:570px;width:2px;height:38px;"></div>
<div class="vl" style="left:571px;top:609px;width:1px;height:72px;"></div>
<div class="vh" style="left:670px;top:570px;width:2px;height:38px;"></div>
<div class="vl" style="left:671px;top:609px;width:1px;height:72px;"></div>
<div class="vh" style="left:740px;top:570px;width:2px;height:38px;"></div>
<div class="vl" style="left:741px;top:609px;width:1px;height:72px;"></div>
<div class="vh" style="left:810px;top:570px;width:2px;height:38px;"></div>
<div class="vl" style="left:811px;top:609px;width:1px;height:72px;"></div>
<div class="hl" style="left:17px;top:626px;width:862px;height:1px;"></div>
<div class="hl" style="left:17px;top:644px;width:862px;height:1px;"></div>
<div class="hl" style="left:17px;top:662px;width:862px;height:1px;"></div>
<div class="hl" style="left:17px;top:680px;width:862px;height:1px;"></div>
<div class="clip" style="left:17px;top:570px;width:99px;height:38px;"><span class="t" style="left:4px;top:7px;">Buchungs-ID</span></div>
<div class="clip" style="left:117px;top:570px;width:99px;height:38px;"><span class="t" style="left:4px;top:7px;letter-spacing:0px">Buchungsnr.</span></div>
<div class="clip" style="left:217px;top:570px;width:44px;height:38px;"><span class="t" style="left:5px;top:7px;letter-spacing:-0.06px">Art der</span><span class="t" style="left:5px;top:21px;">Zahlung</span></div>
<div class="clip" style="left:262px;top:570px;width:59px;height:38px;"><span class="t" style="left:4px;top:7px;">Datum</span></div>
<div class="clip" style="left:322px;top:570px;width:99px;height:38px;"><span class="t" style="left:5px;top:7px;letter-spacing:-0.13px">Verrechnungs-ID</span></div>
<div class="clip" style="left:422px;top:570px;width:49px;height:38px;"><span class="t" style="left:4px;top:7px;">Notiz</span></div>
<div class="clip" style="left:472px;top:570px;width:99px;height:38px;"><span class="t" style="left:4px;top:7px;letter-spacing:-0.03px">Buchungs-ID, auf</span><span class="t" style="left:4px;top:21px;">welche</span><span class="t" style="left:4px;top:35px;">die Buchung</span></div>
<div class="clip" style="left:572px;top:570px;width:99px;height:38px;"><span class="t" style="left:5px;top:7px;letter-spacing:-0.37px">AZ-Bezug der</span><span class="t" style="left:5px;top:21px;">Buchung</span></div>
<div class="clip" style="left:672px;top:570px;width:69px;height:38px;"><span class="t" style="left:5px;top:7px;">(Teil-)</span><span class="t" style="left:5px;top:21px;">Betrag in</span><span class="t" style="left:5px;top:35px;">EUR</span></div>
<div class="clip" style="left:742px;top:570px;width:69px;height:38px;"><span class="t" style="left:4px;top:7px;"><span style="position:static;letter-spacing:-0.45px">Abschließender</span></span><span class="t" style="left:4px;top:21px;">Zahlungsantrag</span></div>
<div class="clip" style="left:812px;top:570px;width:66px;height:38px;"><span class="t" style="left:4px;top:7px;"><span style="position:static;letter-spacing:-0.45px">Rechnungslegung</span></span></div>
<svg width="9" height="5" viewBox="0 0 9 5" style="left:62px;top:571px"><path d="M0.5 4.5 L4.5 0.5 L8.5 4.5" fill="none" stroke="#6a6a6a" stroke-width="1"/></svg>
<div class="clip" style="left:17px;top:609px;width:99px;height:17px;"><span class="t" style="left:2px;top:3px;letter-spacing:-0.3px">ST_21_27__0000000103</span></div>
<div class="clip" style="left:117px;top:609px;width:99px;height:17px;"><span class="t" style="left:2px;top:3px;letter-spacing:-0.03px">(4.13.)AZ-BV-01</span></div>
<div class="clip" style="left:217px;top:609px;width:44px;height:17px;"><span class="t" style="left:2px;top:3px">AZ</span></div>
<div class="clip" style="left:262px;top:609px;width:59px;height:17px;"><span class="t" style="left:2px;top:3px;letter-spacing:0.05px">10.02.2023</span></div>
<div class="clip" style="left:422px;top:609px;width:20px;height:17px;"><span class="t" style="left:2px;top:3px">Test</span></div>
<div class="btn" style="left:448px;top:610px;width:22px;height:15px;"><span class="t ar" style="left:0;right:0;top:0px;text-align:center;line-height:12px">-&gt;</span></div>
<div class="clip" style="left:672px;top:609px;width:69px;height:17px;"><span class="t" style="right:0.5px;top:3px;letter-spacing:-0.03px">-90,00 €</span></div>
<div class="clip" style="left:17px;top:627px;width:99px;height:17px;"><span class="t" style="left:2px;top:3px;letter-spacing:-0.3px">ST_21_27__0000000104</span></div>
<div class="clip" style="left:117px;top:627px;width:99px;height:17px;"><span class="t" style="left:2px;top:3px;letter-spacing:-0.03px">(4.13.)AZ-BV-02</span></div>
<div class="clip" style="left:217px;top:627px;width:44px;height:17px;"><span class="t" style="left:2px;top:3px">AZ</span></div>
<div class="clip" style="left:262px;top:627px;width:59px;height:17px;"><span class="t" style="left:2px;top:3px;letter-spacing:0.05px">10.02.2023</span></div>
<div class="clip" style="left:422px;top:627px;width:20px;height:17px;"><span class="t" style="left:2px;top:3px">Test</span></div>
<div class="btn" style="left:448px;top:628px;width:22px;height:15px;"><span class="t ar" style="left:0;right:0;top:0px;text-align:center;line-height:12px">-&gt;</span></div>
<div class="clip" style="left:672px;top:627px;width:69px;height:17px;"><span class="t" style="right:0.5px;top:3px;letter-spacing:-0.03px">-80,00 €</span></div>
<div class="clip" style="left:17px;top:645px;width:99px;height:17px;"><span class="t" style="left:2px;top:3px;letter-spacing:-0.3px">ST_21_27__0000000105</span></div>
<div class="clip" style="left:117px;top:645px;width:99px;height:17px;"><span class="t" style="left:2px;top:3px;letter-spacing:-0.03px">(4.13.)AZ-BV-03</span></div>
<div class="clip" style="left:217px;top:645px;width:44px;height:17px;"><span class="t" style="left:2px;top:3px">AZ</span></div>
<div class="clip" style="left:262px;top:645px;width:59px;height:17px;"><span class="t" style="left:2px;top:3px;letter-spacing:0.05px">10.02.2023</span></div>
<div class="clip" style="left:422px;top:645px;width:20px;height:17px;"><span class="t" style="left:2px;top:3px">Test</span></div>
<div class="btn" style="left:448px;top:646px;width:22px;height:15px;"><span class="t ar" style="left:0;right:0;top:0px;text-align:center;line-height:12px">-&gt;</span></div>
<div class="clip" style="left:672px;top:645px;width:69px;height:17px;"><span class="t" style="right:0.5px;top:3px;letter-spacing:-0.03px">-70,00 €</span></div>
<div class="clip" style="left:17px;top:663px;width:99px;height:17px;"><span class="t" style="left:2px;top:3px;letter-spacing:-0.3px">ST_21_27__0000000106</span></div>
<div class="clip" style="left:117px;top:663px;width:99px;height:17px;"><span class="t" style="left:2px;top:3px;letter-spacing:-0.03px">AZ_test</span></div>
<div class="clip" style="left:217px;top:663px;width:44px;height:17px;"><span class="t" style="left:2px;top:3px">AZ</span></div>
<div class="clip" style="left:262px;top:663px;width:59px;height:17px;"><span class="t" style="left:2px;top:3px;letter-spacing:0.05px">23.05.2025</span></div>
<div class="clip" style="left:422px;top:663px;width:20px;height:17px;"><span class="t" style="left:2px;top:3px">test</span></div>
<div class="btn" style="left:448px;top:664px;width:22px;height:15px;"><span class="t ar" style="left:0;right:0;top:0px;text-align:center;line-height:12px">-&gt;</span></div>
<div class="clip" style="left:672px;top:663px;width:69px;height:17px;"><span class="t" style="right:0.5px;top:3px;letter-spacing:-0.03px">-0,01 €</span></div>
<div class="btn" style="left:893px;top:570px;width:89px;height:35px;"><span class="t" style="left:0;right:0;top:10px;text-align:center">Neu</span></div>
<div style="left:889px;top:607px;width:97px;height:43px;border:3px solid #ec131c"></div>
<div class="btn" style="left:893px;top:611px;width:89px;height:35px;"><span class="t" style="left:13.5px;top:2px;text-align:left;line-height:14px;white-space:pre">Finanzielle
Berichtigung</span></div>
<div class="btd" style="left:893px;top:652px;width:89px;height:35px;"><span class="t" style="left:0;right:0;top:10px;text-align:center">Anzeigen</span></div>
<div class="btd" style="left:893px;top:693px;width:89px;height:35px;"><span class="t" style="left:0;right:0;top:10px;text-align:center">Bearbeiten</span></div>
</div>
<div class="btd" style="left:1055px;top:830px;width:63px;height:21px;"><span class="t" style="left:-1px;right:1px;top:3px;text-align:center"><span class="u" style="position:static">Z</span>urück</span></div>
<div class="btn" style="left:1130px;top:830px;width:63px;height:21px;"><span class="t" style="left:-1px;right:1px;top:3px;text-align:center"><span class="u" style="position:static">W</span>eiter</span></div>
<div class="btn" style="left:1205px;top:830px;width:83px;height:21px;"><span class="t" style="left:-1px;right:1px;top:3px;text-align:center"><span class="u" style="position:static">A</span>bbrechen</span></div>
</body></html>
